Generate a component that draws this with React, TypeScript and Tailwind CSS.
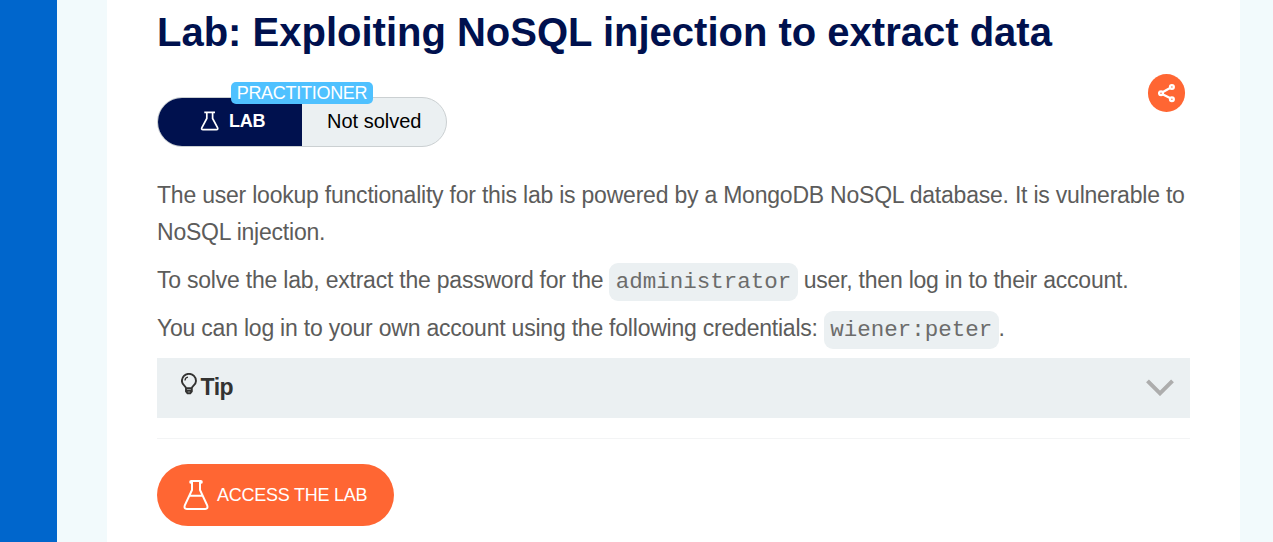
import type { ReactNode } from "react";

function Code({ children }: { children: ReactNode }) {
  return (
    <code className="mt-px inline-block h-[38px] rounded-[9px] bg-[#ebf0f2] px-[6.25px] font-['Liberation_Mono','Courier_New',monospace] text-[22.5px] leading-[38px] tracking-normal text-[#6c6c6b]">
      {children}
    </code>
  );
}

function SmallFlask() {
  return (
    <svg className="mb-[3px] h-5 w-5" viewBox="0 0 20 20" fill="none" stroke="#fff" strokeWidth="1.7">
      <path d="M4.300 1.400h10.700M6.800 1.500v6L1.900 16.500q-.9 2.200 1.100 2.200h13.400q2 0 1.100-2.200L12.600 7.500V1.500" />
    </svg>
  );
}

function LargeFlask() {
  return (
    <svg className="h-[32px] w-[26px]" viewBox="0 0 26 32" fill="none" stroke="#fff" strokeWidth="2">
      <path d="M8.200 2.000h9.600q1 0 1 .9t-1 .9h-.8v7.200l7.200 15.400q1.200 3.500-2 3.500H3.800q-3.200 0-2-3.500L9 11V3.800h-.8q-1 0-1-.9t1-.9zM6.200 16.800h13.600" />
    </svg>
  );
}

export default function App() {
  return (
    <div className="flex h-[542px] overflow-hidden bg-[#f2fafc] font-['Liberation_Sans',Arial,sans-serif]">
      <aside className="w-[57px] shrink-0 bg-[#0066cc]" />
      <main className="ml-[50px] h-full w-[1133px] shrink-0 bg-white pr-[50px] pl-[50px]">
        <h1 className="h-[74px] pt-[9px] text-[40px] leading-[46px] font-bold whitespace-nowrap text-[#00114e]">
          Lab: Exploiting NoSQL injection to extract data
        </h1>
        <div className="flex h-[103px] items-start justify-between">
          <div className="relative mt-[23px] flex h-[50px] w-[290px] overflow-visible rounded-full border border-[#cbd0d2] bg-[#ebf0f2]">
            <div className="flex w-[144px] items-center rounded-l-full bg-[#00114e] pl-[42px] text-[18px] font-bold text-white">
              <SmallFlask />
              <span className="mb-[2px] ml-[9px] tracking-[-0.2px]">LAB</span>
            </div>
            <div className="pl-[25px] text-[20px] leading-[47px] whitespace-nowrap text-black">Not solved</div>
            <span className="absolute top-[-16px] left-[73px] h-[22px] w-[142px] rounded-[5px] bg-[#4fc1ff] text-center text-[18px] leading-[22px] tracking-[-0.28px] text-white">
              PRACTITIONER
            </span>
          </div>
          <button className="mr-[5px] flex h-[38px] w-[37px] items-center justify-center rounded-full bg-[#ff6633]">
            <svg className="h-5 w-[18px]" viewBox="0 0 18 20" fill="none" stroke="#fff" strokeWidth="2.300">
              <path d="m4.500 9.200 8.500-4.700M4.500 11.200l8.500 4.300" />
              <circle cx="3" cy="10.300" r="1.900" />
              <circle cx="13.900" cy="4" r="1.900" />
              <circle cx="13.900" cy="16.300" r="1.900" />
            </svg>
          </button>
        </div>
        <div className="text-[23px] leading-[37px] tracking-[-0.22px] whitespace-nowrap text-[#5c5c5b]">
          <p className="mb-[11px]">
            The user lookup functionality for this lab is powered by a MongoDB NoSQL database. It is vulnerable to
            <br />
            NoSQL injection.
          </p>
          <p className="flex h-[48px] items-start">
            <span>To solve the lab, extract the password for the&nbsp;</span>
            <Code>administrator</Code>
            <span>&nbsp;user, then log in to their account.</span>
          </p>
          <p className="flex h-[48px] items-start">
            <span>You can log in to your own account using the following credentials:&nbsp;</span>
            <Code>wiener:peter</Code>
            <span>.</span>
          </p>
        </div>
        <div className="flex h-[60px] items-center bg-[#ebf0f2] pr-4 pl-6">
          <svg className="mb-2 h-[22px] w-4" viewBox="0 0 16 22" fill="none" stroke="#333332" strokeWidth="1.900">
            <path d="M5 15.300C5 12.800.9 12 .9 7.900A7 7 0 0 1 15 7.900c0 4.100-4.200 4.900-4.200 7.400zM5 15v3.500l1.500 1.700h2.800l1.500-1.700V15M5 17.700h5.800" />
            <path d="M4 7.500Q4 4.600 7 4.200" strokeWidth="1.300" />
          </svg>
          <span className="mb-[2px] ml-[3.5px] text-[23px] leading-[58px] font-bold tracking-[-0.5px] text-[#333332]">Tip</span>
          <svg className="mb-[2px] ml-auto h-[17px] w-7" viewBox="0 0 28 17" fill="none" stroke="#adadad" strokeWidth="4">
            <path d="m1.500 1.800 12.500 12.500L26.500 1.800" />
          </svg>
        </div>
        <hr className="mt-5 border-t border-[#f3f4f5]" />
        <button className="mt-[25px] flex h-[62px] w-[237px] items-center rounded-full bg-[#ff6633] pl-[26px] text-[18px] tracking-[-0.25px] whitespace-nowrap text-white">
          <LargeFlask />
          <span className="ml-[8px]">ACCESS THE LAB</span>
        </button>
      </main>
    </div>
  );
}
